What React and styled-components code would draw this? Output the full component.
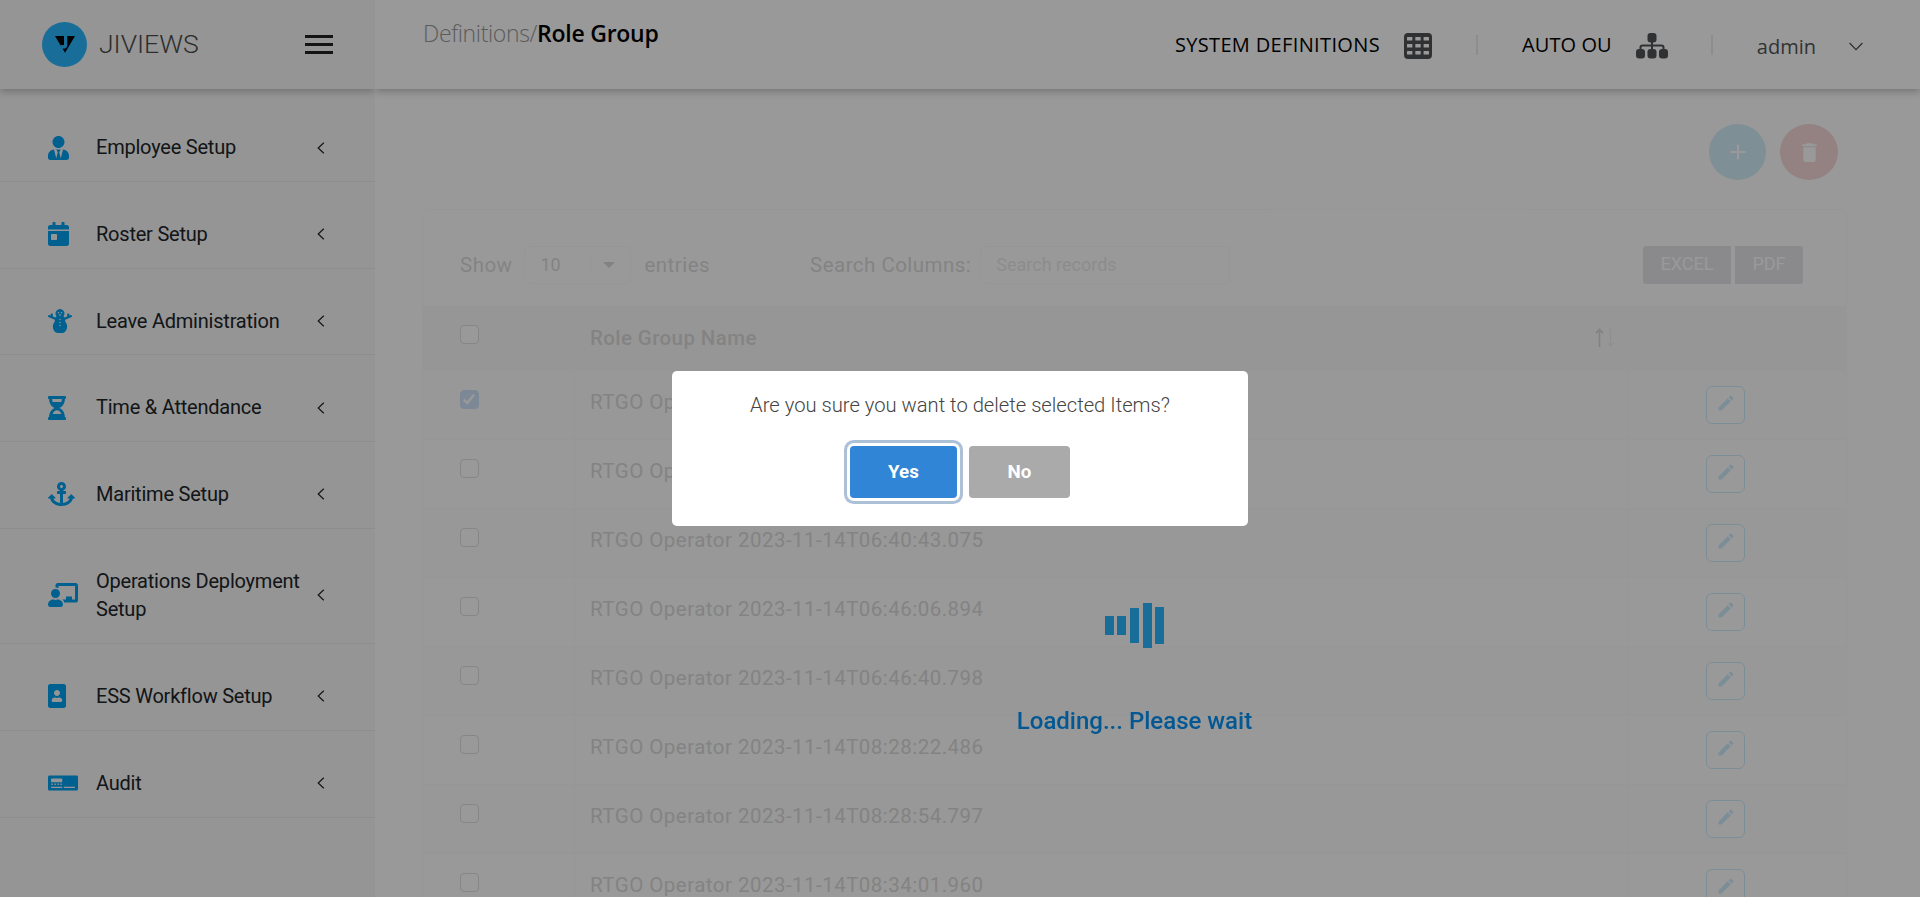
import React from "react";
import styled, { createGlobalStyle, css } from "styled-components";
import {
  FaUserTie,
  FaCalendarDay,
  FaSnowman,
  FaHourglassHalf,
  FaAnchor,
  FaChalkboardTeacher,
  FaPortrait,
  FaDigitalTachograph,
} from "react-icons/fa";
import { MdDelete, MdEdit, MdAdd } from "react-icons/md";

const GlobalStyle = createGlobalStyle`
  *, *::before, *::after { box-sizing: border-box; }
  body {
    margin: 0;
    background: #fff;
    font-family: Roboto, "Liberation Sans", sans-serif;
    overflow: hidden;
  }
  button { font-family: inherit; border: 0; padding: 0; }
`;

const Page = styled.div`
  display: flex;
  height: 897px;
  overflow: hidden;
`;

/* ---------- sidebar ---------- */

const Sidebar = styled.aside`
  width: 375px;
  flex: none;
  background: #f8f8f8;
`;

const headerShadow = css`
  height: 89px;
  box-shadow: 0 3px 7px rgba(0, 0, 0, 0.22);
  clip-path: inset(0 0 -14px 0);
`;

const Brand = styled.div`
  ${headerShadow}
  display: flex;
  align-items: center;
  padding: 0 42px;
`;

const BrandName = styled.span`
  margin-left: 12px;
  padding-bottom: 2px;
  font-size: 26.5px;
  font-weight: 300;
  color: #4c4c4c;
  flex: 1;
`;

const Burger = styled.div`
  width: 28px;
  height: 19px;
  display: flex;
  flex-direction: column;
  justify-content: space-between;
  span {
    height: 3px;
    background: #222;
  }
`;

const Menu = styled.nav`
  padding-top: 6.2px;
`;

const MenuItem = styled.div`
  display: flex;
  align-items: center;
  padding: 38px 50px 19px 48px;
  border-bottom: 1px solid #ececec;
  font-size: 20px;
  line-height: 28.7px;
  color: #212529;
`;

const MenuIcon = styled.span`
  width: 48px;
  flex: none;
  display: flex;
  color: #00a1f1;
  svg {
    height: 24px;
    width: ${(p) => p.$width}px;
  }
`;

const MenuLabel = styled.span`
  flex: 1;
  letter-spacing: -0.22px;
  white-space: pre-line;
`;

/* ---------- main ---------- */

const Main = styled.main`
  flex: 1;
  min-width: 0;
`;

const TopBar = styled.header`
  ${headerShadow}
  display: flex;
  align-items: flex-start;
  padding-left: 48px;
  font-family: "Open Sans", "Noto Sans", sans-serif;
  background: #fff;
`;

const Crumbs = styled.div`
  padding-top: 16px;
  font-size: 23px;
  line-height: 34px;
  font-weight: 300;
  letter-spacing: -0.35px;
  color: #999;
  flex: 1;
  b {
    font-weight: 600;
    color: #000;
    letter-spacing: -0.25px;
  }
`;

const TopLink = styled.div`
  height: 26px;
  margin-top: 33px;
  margin-right: ${(p) => p.$after}px;
  display: flex;
  align-items: center;
  gap: 24px;
  font-size: 20px;
  font-weight: 400;
  color: #000;
  white-space: nowrap;
`;

const TopLabel = styled.span`
  padding-bottom: 4px;
  letter-spacing: ${(p) => p.$spacing}px;
`;

const Divider = styled.span`
  width: 2px;
  height: 20px;
  margin-top: 35px;
  margin-right: ${(p) => p.$after}px;
  background: #ececec;
`;

const UserMenu = styled.div`
  height: 26px;
  margin-top: 33px;
  margin-right: 57px;
  display: flex;
  align-items: center;
  gap: 33px;
  font-size: 20px;
  color: #555;
`;

const Content = styled.section`
  padding: 35px 73px 0 47px;
  opacity: 0.2;
`;

const Actions = styled.div`
  display: flex;
  justify-content: flex-end;
  gap: 14px;
  padding-right: 9px;
`;

const RoundButton = styled.button`
  width: ${(p) => p.$width}px;
  height: 56px;
  border-radius: 50%;
  display: grid;
  place-items: center;
  color: #fff;
  background: ${(p) => p.$color};
`;

const Card = styled.div`
  margin-top: 29px;
  border: 1px solid #f0f0f0;
  border-radius: 6px 6px 0 0;
`;

const Toolbar = styled.div`
  height: 96px;
  display: flex;
  align-items: flex-start;
  padding: 36px 43px 0 37px;
  font-size: 20.5px;
  line-height: 38px;
  letter-spacing: 0.47px;
  color: #4f4f4f;
`;

const Field = styled.div`
  height: 38px;
  width: ${(p) => p.$width}px;
  margin: 0 ${(p) => p.$after}px 0 ${(p) => p.$before}px;
  padding: 0 15px;
  display: flex;
  align-items: center;
  justify-content: space-between;
  border: 1px solid #efefef;
  border-radius: 5px;
  font-size: 18px;
  letter-spacing: 0;
  color: ${(p) => p.$color};
`;

const SelectArrow = styled.span`
  height: 18px;
  padding-left: 12px;
  border-left: 1px solid #eee;
  display: flex;
  align-items: center;
`;

const SearchLabel = styled.span`
  margin-left: 100px;
`;

const Exports = styled.div`
  margin-left: auto;
  display: flex;
  gap: 4px;
`;

const ExportButton = styled.button`
  width: ${(p) => p.$width}px;
  height: 38px;
  padding-bottom: 3px;
  font-size: 18px;
  color: #fff;
  background: #8484a5;
  border-radius: ${(p) => p.$radius};
`;

const Table = styled.div`
  font-size: 20.5px;
  color: #4a4a4a;
`;

const Row = styled.div`
  display: grid;
  grid-template-columns: 151px 1054px 1fr;
  height: ${(p) => (p.$head ? 65 : 69)}px;
  background: ${(p) => (p.$head ? "#ebebeb" : p.$odd ? "#f6f6f6" : "#fff")};
  font-weight: ${(p) => (p.$head ? 500 : 400)};
  border-bottom: ${(p) => (p.$head ? 0 : 1)}px solid #efefef;
`;

const CheckCell = styled.div`
  padding: ${(p) => p.$top}px 0 0 37px;
`;

const Check = styled.span`
  display: flex;
  width: 19px;
  height: 19px;
  border-radius: 4px;
  border: 1.5px solid ${(p) => (p.$on ? "#1a78f0" : "#666")};
  background: ${(p) => (p.$on ? "#1a78f0" : "#fff")};
`;

const NameCell = styled.div`
  display: flex;
  align-items: center;
  justify-content: space-between;
  padding: 0 13px 6px 15px;
  letter-spacing: 0.47px;
  border-left: 1px solid ${(p) => (p.$head ? "transparent" : "#f0f0f0")};
`;

const HeadCell = styled(NameCell)`
  padding-bottom: 2px;
  letter-spacing: 0.4px;
`;

const EditCell = styled.div`
  padding: 15px 0 0 77px;
  border-left: 1px solid #f0f0f0;
`;

const EditButton = styled.button`
  width: 39px;
  height: 38px;
  padding-bottom: 4px;
  display: grid;
  place-items: center;
  border: 1.5px solid #12a8f5;
  border-radius: 6px;
  background: #fff;
  color: #12a8f5;
`;

/* ---------- loader and dialog ---------- */

const Loader = styled.div`
  position: fixed;
  top: 603px;
  left: 375px;
  right: 26px;
  display: flex;
  flex-direction: column;
  align-items: center;
  gap: 57px;
  font-size: 24px;
  line-height: 32px;
  font-weight: 500;
  color: #0693f5;
`;

const Bars = styled.div`
  height: 45px;
  display: flex;
  align-items: center;
  gap: 3.6px;
`;

const Bar = styled.span`
  width: 9px;
  background: #28b6ff;
`;

const Backdrop = styled.div`
  position: fixed;
  inset: 0;
  display: grid;
  place-items: center;
  background: rgba(0, 0, 0, 0.4);
`;

const Dialog = styled.div`
  width: 576px;
  height: 155px;
  padding-top: 18px;
  border-radius: 5px;
  background: #fff;
  text-align: center;
`;

const Question = styled.p`
  margin: 0;
  font-size: 20.2px;
  line-height: 32px;
  font-weight: 300;
  color: #444;
`;

const DialogActions = styled.div`
  margin-top: 25px;
  display: flex;
  justify-content: center;
  gap: 12px;
`;

const DialogButton = styled.button`
  width: ${(p) => p.$width}px;
  height: 52px;
  border-radius: 4px;
  font-size: 18.8px;
  font-weight: 700;
  color: #fff;
  background: ${(p) => p.$color};
  box-shadow: ${(p) => (p.$focus ? "0 0 0 3px #fff, 0 0 0 6px #acc1d7" : "none")};
`;

const LogoMark = () => (
  <svg width="45" height="45" viewBox="0 0 45 45">
    <circle cx="22.5" cy="22.5" r="22.5" fill="#28b6ff" />
    <path d="M13 14h9v9l-3.5.2zM25.300 14h7.700l-10 16.800-2.500-4.200c3 .4 4.800-.6 4.800-3z" fill="#000" />
  </svg>
);

const ChevronLeft = () => (
  <svg width="8" height="12" viewBox="0 0 8 12" fill="none" stroke="#222" strokeWidth="1.2">
    <path d="M6.800.7L1.200 6l5.600 5.300" />
  </svg>
);

const ChevronDown = () => (
  <svg width="14" height="9" viewBox="0 0 14 9" fill="none" stroke="#444" strokeWidth="1.1">
    <path d="M.6 1L7 7.600 13.400 1" />
  </svg>
);

const GridIcon = () => (
  <svg width="28" height="26" viewBox="0 0 28 26">
    <rect width="28" height="26" rx="4" fill="#505356" />
    {[4, 11, 18].map((y) =>
      [3, 11.3, 19.6].map((x) => (
        <rect key={`${x}-${y}`} x={x} y={y} width="5.400" height="3.600" rx=".5" fill="#fff" />
      ))
    )}
  </svg>
);

const OrgIcon = () => (
  <svg width="32" height="26" viewBox="0 0 32 26" fill="#505356">
    <rect x="11.500" y="0" width="9" height="9.500" rx="3" />
    <rect x="0" y="16" width="9" height="9.500" rx="3" />
    <rect x="11.500" y="16" width="9" height="9.500" rx="3" />
    <rect x="23" y="16" width="9" height="9.500" rx="3" />
    <path d="M4.500 17v-2.500q0-2 2-2h19q2 0 2 2V17M16 8v9" fill="none" stroke="#505356" strokeWidth="2" />
  </svg>
);

const SortIcon = () => (
  <svg width="20" height="20" viewBox="0 0 20 20" fill="none">
    <path d="M4.500 19V2M1 5.200L4.500 1.500 8 5.200" stroke="#444" strokeWidth="1.700" />
    <path d="M15.500 1v17M12.500 15l3 3 3-3" stroke="#a8a8a8" strokeWidth="1.200" />
  </svg>
);

const CheckIcon = () => (
  <svg width="16" height="16" viewBox="0 0 16 16" fill="none">
    <path d="M2.800 8.600l3.500 3.500 6.700-8.600" stroke="#fff" strokeWidth="2.400" />
  </svg>
);

const MENU = [
  ["Employee Setup", FaUserTie, 21],
  ["Roster Setup", FaCalendarDay, 21],
  ["Leave Administration", FaSnowman, 24],
  ["Time & Attendance", FaHourglassHalf, 18],
  ["Maritime Setup", FaAnchor, 27],
  ["Operations Deployment\nSetup", FaChalkboardTeacher, 30],
  ["ESS Workflow Setup", FaPortrait, 18],
  ["Audit", FaDigitalTachograph, 30],
];

const ROWS = [
  "RTGO Operator 2023-11-14T06:34:51.216",
  "RTGO Operator 2023-11-14T06:38:12.530",
  "RTGO Operator 2023-11-14T06:40:43.075",
  "RTGO Operator 2023-11-14T06:46:06.894",
  "RTGO Operator 2023-11-14T06:46:40.798",
  "RTGO Operator 2023-11-14T08:28:22.486",
  "RTGO Operator 2023-11-14T08:28:54.797",
  "RTGO Operator 2023-11-14T08:34:01.960",
];

const BAR_HEIGHTS = [19, 19, 35, 45, 37];

export default function App() {
  return (
    <>
      <GlobalStyle />
      <Page>
        <Sidebar>
          <Brand>
            <LogoMark />
            <BrandName>JIVIEWS</BrandName>
            <Burger>
              <span />
              <span />
              <span />
            </Burger>
          </Brand>
          <Menu>
            {MENU.map(([label, Icon, width]) => (
              <MenuItem key={label}>
                <MenuIcon $width={width}>
                  <Icon />
                </MenuIcon>
                <MenuLabel>{label}</MenuLabel>
                <ChevronLeft />
              </MenuItem>
            ))}
          </Menu>
        </Sidebar>

        <Main>
          <TopBar>
            <Crumbs>
              Definitions/<b>Role Group</b>
            </Crumbs>
            <TopLink $after={44}>
              <TopLabel $spacing={0.35}>SYSTEM DEFINITIONS</TopLabel>
              <GridIcon />
            </TopLink>
            <Divider $after={44} />
            <TopLink $after={43}>
              <TopLabel $spacing={0.1}>AUTO OU</TopLabel>
              <OrgIcon />
            </TopLink>
            <Divider $after={44} />
            <UserMenu>
              admin
              <ChevronDown />
            </UserMenu>
          </TopBar>

          <Content>
            <Actions>
              <RoundButton $width={57} $color="#23aef0">
                <MdAdd size={26} />
              </RoundButton>
              <RoundButton $width={58} $color="#d93d3d">
                <MdDelete size={25} />
              </RoundButton>
            </Actions>
            <Card>
              <Toolbar>
                Show
                <Field $width={107} $before={12} $after={13} $color="#4f4f4f">
                  10
                  <SelectArrow>
                    <svg width="12" height="6" viewBox="0 0 12 6">
                      <path d="M0 0h12L6 6z" fill="#444" />
                    </svg>
                  </SelectArrow>
                </Field>
                entries
                <SearchLabel>Search Columns:</SearchLabel>
                <Field $width={250} $before={9} $after={0} $color="#999">
                  Search records
                </Field>
                <Exports>
                  <ExportButton $width={88} $radius="3px 0 0 3px">
                    EXCEL
                  </ExportButton>
                  <ExportButton $width={68} $radius="0 3px 3px 0">
                    PDF
                  </ExportButton>
                </Exports>
              </Toolbar>
              <Table>
                <Row $head>
                  <CheckCell $top={19}>
                    <Check />
                  </CheckCell>
                  <HeadCell $head>
                    Role Group Name
                    <SortIcon />
                  </HeadCell>
                </Row>
                {ROWS.map((name, i) => (
                  <Row key={name} $odd={i % 2 === 0}>
                    <CheckCell $top={19}>
                      <Check $on={i === 0}>{i === 0 && <CheckIcon />}</Check>
                    </CheckCell>
                    <NameCell>{name}</NameCell>
                    <EditCell>
                      <EditButton>
                        <MdEdit size={20} />
                      </EditButton>
                    </EditCell>
                  </Row>
                ))}
              </Table>
            </Card>
          </Content>
        </Main>
      </Page>

      <Loader>
        <Bars>
          {BAR_HEIGHTS.map((h, i) => (
            <Bar key={i} style={{ height: h }} />
          ))}
        </Bars>
        Loading... Please wait
      </Loader>

      <Backdrop>
        <Dialog>
          <Question>Are you sure you want to delete selected Items?</Question>
          <DialogActions>
            <DialogButton $width={107} $color="#3085d6" $focus>
              Yes
            </DialogButton>
            <DialogButton $width={101} $color="#aaa">
              No
            </DialogButton>
          </DialogActions>
        </Dialog>
      </Backdrop>
    </>
  );
}
